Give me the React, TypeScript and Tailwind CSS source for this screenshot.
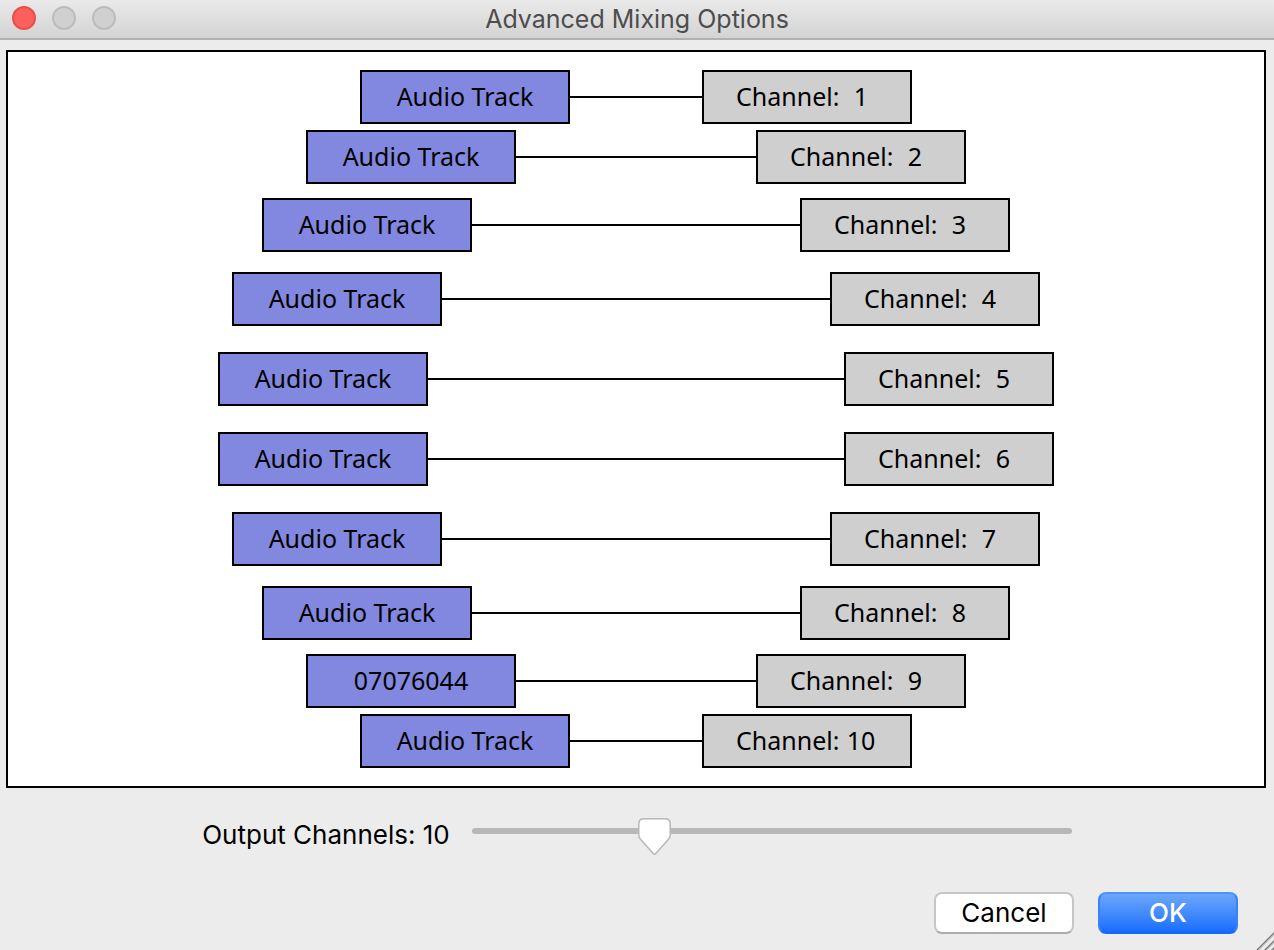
import { useState } from "react";

type Row = { track: string; width: string; gap: string };

const rows: Row[] = [
  { track: "Audio Track", width: "w-[552px]", gap: "" },
  { track: "Audio Track", width: "w-[660px]", gap: "mt-1.5" },
  { track: "Audio Track", width: "w-[748px]", gap: "mt-3.5" },
  { track: "Audio Track", width: "w-[808px]", gap: "mt-5" },
  { track: "Audio Track", width: "w-[836px]", gap: "mt-[26px]" },
  { track: "Audio Track", width: "w-[836px]", gap: "mt-[26px]" },
  { track: "Audio Track", width: "w-[808px]", gap: "mt-[26px]" },
  { track: "Audio Track", width: "w-[748px]", gap: "mt-5" },
  { track: "07076044", width: "w-[660px]", gap: "mt-3.5" },
  { track: "Audio Track", width: "w-[552px]", gap: "mt-1.5" },
];

const MIN = 1;
const MAX = 32;

function TitleBar() {
  return (
    <header className="grid h-10 grid-cols-[1fr_auto_1fr] items-center border-b-2 border-[#b1b1b1] bg-linear-to-b from-[#eaeaea] to-[#d3d3d3] px-3">
      <div className="flex gap-4 pb-0.5">
        <button type="button" aria-label="Close" className="size-6 rounded-full border-2 border-[#e8504b] bg-[#fc605c]" />
        <button type="button" aria-label="Minimize" disabled className="size-6 rounded-full border-2 border-[#bcbcbc] bg-[#d0d0d0]" />
        <button type="button" aria-label="Zoom" disabled className="size-6 rounded-full border-2 border-[#bcbcbc] bg-[#d0d0d0]" />
      </div>
      <h1 className="text-[25px] leading-8 text-[#4d4d4d]">Advanced Mixing Options</h1>
    </header>
  );
}

function MixRow({ row, channel }: { row: Row; channel: number }) {
  return (
    <li className={`flex max-w-full items-center ${row.width} ${row.gap}`}>
      <div className="flex h-[54px] w-[210px] shrink-0 items-center justify-center border-2 border-black bg-[#8288df] pb-0.5">
        {row.track}
      </div>
      <div className="h-0.5 flex-1 bg-black" />
      <div className="flex h-[54px] w-[210px] shrink-0 items-center border-2 border-black bg-[#cfcfcf] pb-0.5 pl-8">
        <span className="w-[109px]">Channel:</span>
        <span className="w-8 text-center">{channel}</span>
      </div>
    </li>
  );
}

function ChannelSlider({ value, onChange }: { value: number; onChange: (n: number) => void }) {
  const ratio = (value - MIN) / (MAX - MIN);
  return (
    <div className="relative h-10 w-[600px]">
      <input
        id="output-channels"
        type="range"
        min={MIN}
        max={MAX}
        value={value}
        onChange={(e) => onChange(Number(e.target.value))}
        className="block h-10 w-full appearance-none bg-transparent [&::-webkit-slider-runnable-track]:h-1.5 [&::-webkit-slider-runnable-track]:rounded-full [&::-webkit-slider-runnable-track]:bg-[#b8b8b8] [&::-webkit-slider-thumb]:h-1.5 [&::-webkit-slider-thumb]:w-10 [&::-webkit-slider-thumb]:appearance-none [&::-webkit-slider-thumb]:opacity-0"
      />
      <svg
        aria-hidden="true"
        viewBox="0 0 40 44"
        className="pointer-events-none absolute top-0.5 h-11 w-10"
        style={{ left: `calc((100% - 40px) * ${ratio})` }}
      >
        <path
          d="M10 5.8H31Q36.2 5.8 36.2 11V22Q36.2 24.5 34.5 26.3L21.8 40.5Q20.5 42 19.2 40.5L6.5 26.3Q4.8 24.5 4.8 22V11Q4.8 5.8 10 5.8Z"
          fill="#fff"
          stroke="#b8b8b8"
          strokeWidth="1.5"
        />
      </svg>
    </div>
  );
}

export default function App() {
  const [channels, setChannels] = useState(10);
  return (
    <div className="flex min-h-screen flex-col bg-[#ececec] font-['Inter',sans-serif] text-black">
      <TitleBar />
      <main className="flex flex-1 flex-col">
        <ul className="mt-2.5 mr-2 ml-1.5 flex flex-col items-center border-2 border-black bg-white py-[18px] font-['Noto_Sans',sans-serif] text-[25px] leading-8">
          {rows.map((row, i) => (
            <MixRow key={i} row={row} channel={i + 1} />
          ))}
        </ul>
        <div className="mt-[23px] flex items-center justify-center gap-[22px]">
          <label htmlFor="output-channels" className="pt-2 text-[26px] leading-8">
            Output Channels: {channels}
          </label>
          <ChannelSlider value={channels} onChange={setChannels} />
        </div>
      </main>
      <footer className="relative flex justify-end gap-6 pr-9 pb-4 text-[26px] leading-8">
        <button type="button" className="h-[42px] w-[140px] rounded-lg border-2 border-[#c6c6c6] border-b-[#acacac] bg-white">
          Cancel
        </button>
        <button type="button" className="h-[42px] w-[140px] rounded-lg border-2 border-x-[#3a82f7] border-t-[#4f93f8] border-b-[#1468fb] bg-linear-to-b from-[#6ca6f9] to-[#156dfd] font-medium text-white">
          OK
        </button>
        <svg aria-hidden="true" viewBox="0 0 18 18" className="absolute right-0 bottom-0 size-[18px]">
          <path d="M0 19L19 0M8 19L19 8M15 19L19 15" stroke="#7d7d7d" strokeWidth="1.5" fill="none" />
          <path d="M2 19L19 2M10 19L19 10" stroke="#c4c4c4" strokeWidth="1" fill="none" />
        </svg>
      </footer>
    </div>
  );
}
